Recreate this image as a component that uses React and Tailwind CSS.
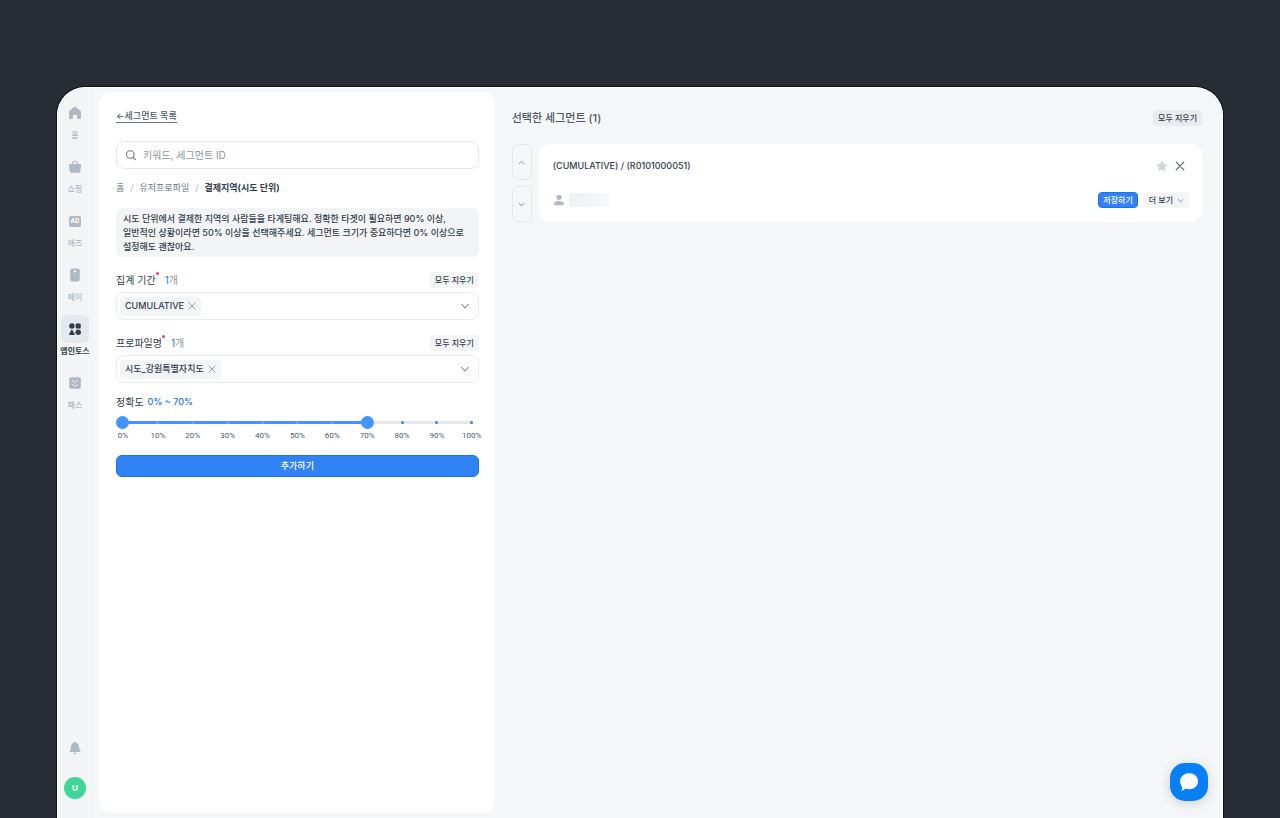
import clsx from "clsx";
import React, { useState } from "react";

const HomeIcon = () => (
  <svg viewBox="0 0 14 14" className="size-[14px]" fill="currentColor" aria-hidden="true">
    <path d="M6.100 1a1.400 1.400 0 0 1 1.800 0l4.500 3.700c.4.300.6.700.6 1.200v5.700c0 .8-.5 1.300-1.300 1.300H9.100V9.800c0-.6-.4-1-1-1H5.900c-.6 0-1 .4-1 1v3.100H2.300c-.8 0-1.300-.5-1.300-1.300V5.900c0-.5.2-.9.6-1.200z" />
  </svg>
);

const ShoppingIcon = () => (
  <svg viewBox="0 0 14 14" className="size-[14px]" aria-hidden="true">
    <path d="M4.300 4.800C4.300 2.300 5.300 1.200 7 1.200s2.700 1.100 2.700 3.600" fill="none" stroke="currentColor" strokeWidth="1.100" />
    <path d="M2 4h10c.7 0 1.200.6 1.100 1.300l-.8 5.600c-.2 1.200-1 1.900-2.200 1.900H3.900c-1.200 0-2-.7-2.200-1.900L.9 5.300C.8 4.600 1.300 4 2 4z" fill="currentColor" />
  </svg>
);

const AdsIcon = () => (
  <span className="flex h-[11px] w-[12px] items-center justify-center rounded-xs bg-current">
    <span className="text-[6px] leading-none font-bold text-white">AD</span>
  </span>
);

const PayIcon = () => (
  <svg viewBox="0 0 14 14" className="size-[14px]" aria-hidden="true">
    <rect x="2.200" y="0.600" width="9.600" height="12.800" rx="1.800" fill="currentColor" />
    <circle cx="7" cy="3.400" r="1.100" fill="white" />
  </svg>
);

const AppsIcon = () => (
  <svg viewBox="0 0 14 14" className="size-[14px]" fill="currentColor" aria-hidden="true">
    <circle cx="3.900" cy="4" r="2.700" />
    <rect x="7.700" y="1.500" width="5" height="5" rx="0.800" />
    <path d="M3.400 8.100c.2-.4.800-.4 1 0l2.300 4c.2.400 0 .9-.5.900H1.600c-.5 0-.7-.5-.5-.9z" />
    <circle cx="10.200" cy="10.300" r="2.700" />
  </svg>
);

const PassIcon = () => (
  <svg viewBox="0 0 14 14" className="size-[14px]" aria-hidden="true">
    <rect x="1.200" y="1.200" width="11.600" height="11.600" rx="1.800" fill="currentColor" />
    <g fill="none" stroke="white" strokeWidth="0.900" strokeLinecap="round">
      <path d="M4.600 4.600v.7M9.400 4.600v.7M7 5.200v1.600M4.300 8.200c.6 1.200 1.500 1.700 2.700 1.700s2.100-.5 2.700-1.700" />
    </g>
  </svg>
);

const SearchIcon = () => (
  <svg viewBox="0 0 12 12" className="size-3 shrink-0 text-[#6b7684]" fill="none" stroke="currentColor" strokeWidth="1.100" strokeLinecap="round" aria-hidden="true">
    <circle cx="5.300" cy="5.500" r="3.800" />
    <path d="M8.200 8.400l2.300 2.300" />
  </svg>
);

const CloseIcon = ({ className }) => (
  <svg viewBox="0 0 10 10" className={className} fill="none" stroke="currentColor" strokeWidth="1.100" strokeLinecap="round" aria-hidden="true">
    <path d="M1.200 1.200l7.600 7.600M8.800 1.200l-7.600 7.600" />
  </svg>
);

const ChevronIcon = ({ up, className }) => (
  <svg viewBox="0 0 10 10" className={className} fill="none" stroke="currentColor" strokeWidth="1.100" strokeLinecap="round" strokeLinejoin="round" aria-hidden="true">
    <path d={up ? "M1.500 6.800L5 3.300l3.500 3.500" : "M1.500 3.300L5 6.800l3.500-3.500"} />
  </svg>
);

const StarIcon = () => (
  <svg viewBox="0 0 12 12" className="size-3" fill="currentColor" stroke="currentColor" strokeWidth="0.800" strokeLinejoin="round" aria-hidden="true">
    <path d="M6 .9l1.600 3.300 3.600.5-2.600 2.500.6 3.600L6 9.100l-3.200 1.700.6-3.600L.8 4.700l3.600-.5z" />
  </svg>
);

const UserIcon = () => (
  <svg viewBox="0 0 12 12" className="size-3 text-[#b0b8c1]" fill="currentColor" aria-hidden="true">
    <circle cx="6" cy="3.300" r="2.600" />
    <path d="M6 6.900c3 0 5 1.300 5 3 0 .9-.6 1.300-1.500 1.300h-7C1.600 11.200 1 10.800 1 9.900c0-1.700 2-3 5-3z" />
  </svg>
);

const BellIcon = () => (
  <svg viewBox="0 0 14 14" className="size-[14px]" fill="currentColor" aria-hidden="true">
    <path d="M7 .8c.6 0 1 .4 1 .9 1.900.4 3.100 2 3.100 4v2.200l1.300 1.800c.4.600.1 1.200-.6 1.200H2.200c-.7 0-1-.6-.6-1.200l1.300-1.800V5.700c0-2 1.200-3.600 3.100-4 0-.5.400-.9 1-.9z" />
    <path d="M5.300 11.800h3.400c-.2.900-.8 1.400-1.700 1.400s-1.500-.5-1.700-1.400z" />
  </svg>
);

const MENU = [
  { label: "홈", icon: <HomeIcon /> },
  { label: "쇼핑", icon: <ShoppingIcon /> },
  { label: "애즈", icon: <AdsIcon /> },
  { label: "페이", icon: <PayIcon /> },
  { label: "앱인토스", icon: <AppsIcon />, active: true },
  { label: "패스", icon: <PassIcon /> },
];

const TICKS = [0, 10, 20, 30, 40, 50, 60, 70, 80, 90, 100];

const Sidebar = () => (
  <aside className="flex w-9 shrink-0 flex-col items-center justify-between bg-[#f2f4f6] pt-[11px] pr-0.5 pb-[19px]">
    <nav className="flex flex-col items-center gap-3">
      {MENU.map((item) => (
        <a
          key={item.label}
          href="#"
          className={clsx(
            "flex flex-col items-center gap-0.5",
            item.active ? "text-[#333d4b]" : "text-[#b0b8c1]"
          )}
        >
          <span
            className={clsx(
              "flex size-7 items-center justify-center rounded-md",
              item.active && "bg-[#e5e8ed]"
            )}
          >
            {item.icon}
          </span>
          <span className={clsx("text-[8px] leading-3 whitespace-nowrap", item.active ? "font-bold" : "font-medium")}>
            {item.label}
          </span>
        </a>
      ))}
    </nav>
    <div className="flex flex-col items-center gap-[22px]">
      <button type="button" aria-label="알림" className="text-[#b0b8c1]">
        <BellIcon />
      </button>
      <button type="button" className="size-[22px] rounded-full bg-[#3fd599] text-[8px] font-bold text-white">
        U
      </button>
    </div>
  </aside>
);

const ClearButton = ({ className, onClick }) => (
  <button
    type="button"
    onClick={onClick}
    className={clsx("h-4 shrink-0 rounded px-[5px] text-[8px] leading-4 font-medium text-[#333d4b]", className)}
  >
    모두 지우기
  </button>
);

const SelectField = ({ id, label, initial }) => {
  const [values, setValues] = useState([initial]);

  return (
    <div className="mt-[15px]">
      <div className="flex items-center justify-between">
        <div className="flex items-center text-[10px] leading-4">
          <label htmlFor={id} className="flex text-[#333d4b]">
            {label}
            <span className="size-[3px] rounded-full bg-[#f04452]" />
          </label>
          <span className="ml-1.5 text-[#8b95a1]">
            <span className="text-[#2272eb]">{values.length}</span>개
          </span>
        </div>
        <ClearButton className="bg-[#f2f4f6]" onClick={() => setValues([])} />
      </div>
      <div className="mt-1 flex h-7 items-center rounded-lg border border-[#e9ecef] pl-[3px]">
        {values.map((value) => (
          <span key={value} className="flex h-[19px] items-center gap-1 rounded bg-[#f2f4f6] px-[5px] text-[9px] font-medium text-[#333d4b]">
            {value}
            <button type="button" aria-label={`${value} 삭제`} onClick={() => setValues([])} className="text-[#8b95a1]">
              <CloseIcon className="size-2" />
            </button>
          </span>
        ))}
        <div className="relative h-full flex-1">
          <select id={id} className="size-full appearance-none bg-transparent outline-none" defaultValue="">
            <option value="" />
            <option value={initial}>{initial}</option>
          </select>
          <ChevronIcon className="pointer-events-none absolute top-2 right-2 size-[10px] text-[#8b95a1]" />
        </div>
      </div>
    </div>
  );
};

const RANGE_INPUT =
  "pointer-events-none absolute inset-0 size-full appearance-none bg-transparent outline-none [&::-webkit-slider-thumb]:pointer-events-auto [&::-webkit-slider-thumb]:size-[13px] [&::-webkit-slider-thumb]:appearance-none [&::-webkit-slider-thumb]:rounded-full [&::-webkit-slider-thumb]:bg-[#4593fc]";

const AccuracySlider = () => {
  const [from, setFrom] = useState(0);
  const [to, setTo] = useState(70);

  return (
    <div role="group" aria-labelledby="accuracy" className="mt-[11px]">
      <div className="flex gap-1 leading-4">
        <span id="accuracy" className="text-[10px] text-[#333d4b]">정확도</span>
        <span className="text-[9px] font-medium text-[#2272eb]">{`${from}% ~ ${to}%`}</span>
      </div>
      <div className="relative mt-1.5 flex h-[13px] items-center px-[7px]">
        <div className="relative h-[3px] w-full rounded-full bg-[#e5e8eb]">
          <div
            className="absolute inset-y-0 bg-[#4593fc]"
            style={{ left: `${from}%`, width: `${to - from}%` }}
          />
          <div className="absolute inset-0 flex items-center justify-between">
            {TICKS.map((tick) => (
              <span key={tick} className="flex w-0 justify-center">
                <span
                  className={clsx(
                    "size-[3px] shrink-0 rounded-full",
                    tick > to ? "bg-[#3182f6]" : "bg-[#64a8ff]"
                  )}
                />
              </span>
            ))}
          </div>
        </div>
        <input
          type="range"
          aria-label="최소 정확도"
          min="0"
          max="100"
          step="10"
          value={from}
          onChange={(e) => setFrom(Math.min(Number(e.target.value), to))}
          className={RANGE_INPUT}
        />
        <input
          type="range"
          aria-label="최대 정확도"
          min="0"
          max="100"
          step="10"
          value={to}
          onChange={(e) => setTo(Math.max(Number(e.target.value), from))}
          className={RANGE_INPUT}
        />
      </div>
      <div className="mt-px flex justify-between px-[7px] font-['Roboto',sans-serif] text-[8px] leading-3 text-[#4e5968]">
        {TICKS.map((tick) => (
          <span key={tick} className="flex w-0 justify-center">
            {`${tick}%`}
          </span>
        ))}
      </div>
    </div>
  );
};

const FilterPanel = () => (
  <section className="mt-1 mb-[5px] ml-[5px] w-[34%] shrink-0 rounded-xl bg-white pt-[17px] pr-4 pl-[17px]">
    <a href="#" className="block w-fit border-b border-[#6b7684] text-[9px] leading-[13px] font-medium text-[#4e5968]">
      ←세그먼트 목록
    </a>
    <label className="mt-[18px] flex h-7 items-center gap-1.5 rounded-lg border border-[#e5e8eb] px-2">
      <SearchIcon />
      <input
        type="search"
        aria-label="세그먼트 검색"
        placeholder="키워드, 세그먼트 ID"
        className="min-w-0 flex-1 bg-transparent text-[10px] leading-4 outline-none placeholder:text-[#8b95a1]"
      />
    </label>
    <nav className="mt-[11px] flex gap-1.5 text-[9px] leading-4 text-[#6b7684]">
      <a href="#">홈</a>
      <span className="text-[#b0b8c1]">/</span>
      <a href="#">유저프로파일</a>
      <span className="text-[#b0b8c1]">/</span>
      <span className="font-bold text-[#333d4b]">결제지역(시도 단위)</span>
    </nav>
    <p className="mt-3 rounded-md bg-[#f2f4f6] px-[7px] pt-1 pb-[3px] text-[9px] leading-[14px] font-medium text-[#333d4b]">
      시도 단위에서 결제한 지역의 사람들을 타게팅해요. 정확한 타겟이 필요하면 90% 이상,
      <br />
      일반적인 상황이라면 50% 이상을 선택해주세요. 세그먼트 크기가 중요하다면 0% 이상으로
      <br />
      설정해도 괜찮아요.
    </p>
    <SelectField id="period" label="집계 기간" initial="CUMULATIVE" />
    <SelectField id="profile" label="프로파일명" initial="시도_강원특별자치도" />
    <AccuracySlider />
    <button
      type="button"
      className="mt-[13px] h-[22px] w-full rounded-md border border-[#1b72f0] bg-[#3182f6] text-[9px] font-medium text-white"
    >
      추가하기
    </button>
  </section>
);

const MoveButton = ({ up }) => (
  <button
    type="button"
    aria-label={up ? "위로 이동" : "아래로 이동"}
    className="flex w-5 flex-1 items-center justify-center rounded-md border border-[#e5e8eb] text-[#6b7684]"
  >
    <ChevronIcon up={up} className="size-[7px]" />
  </button>
);

const SegmentCard = () => (
  <article className="flex h-[78px] flex-1 flex-col justify-between rounded-xl bg-white pt-[13px] pr-[13px] pb-[14px] pl-[14px]">
    <div className="flex items-center justify-between">
      <h2 className="text-[9px] leading-[18px] font-medium text-[#333d4b]">(CUMULATIVE) / (R0101000051)</h2>
      <div className="flex items-center gap-[7px] pr-1">
        <button type="button" aria-label="즐겨찾기" className="text-[#d1d6db]">
          <StarIcon />
        </button>
        <button type="button" aria-label="삭제" className="text-[#4e5968]">
          <CloseIcon className="size-[10px]" />
        </button>
      </div>
    </div>
    <div className="flex items-center justify-between">
      <div className="flex items-center gap-1">
        <UserIcon />
        <span className="h-[14px] w-10 rounded bg-linear-to-r from-[#f0f1f3] to-[#f6f7f8]" />
      </div>
      <div className="flex items-center gap-1.5">
        <button type="button" className="h-4 rounded border border-[#1b72f0] bg-[#3182f6] px-1 text-[8px] leading-[14px] font-medium text-white">
          저장하기
        </button>
        <button type="button" className="flex h-4 items-center gap-1 rounded bg-[#f2f4f6] px-[5px] text-[8px] font-medium text-[#333d4b]">
          더 보기
          <ChevronIcon className="size-[7px] text-[#6b7684]" />
        </button>
      </div>
    </div>
  </article>
);

const App = () => (
  <div className="flex min-h-screen flex-col bg-[#282c35] px-[57px] pt-[87px] font-['Inter','Noto_Sans_CJK_KR',sans-serif]">
    <div className="flex flex-1 overflow-hidden rounded-t-[28px] border border-b-0 border-white bg-[#f5f6f8] ring-1 ring-[#0d1015]">
      <Sidebar />
      <FilterPanel />
      <main className="min-w-0 flex-1 pt-[22px] pr-5 pl-[17px]">
        <header className="flex items-center justify-between">
          <h1 className="text-[11px] leading-4 font-medium text-[#4e5968]">선택한 세그먼트 (1)</h1>
          <ClearButton className="bg-[#e8ebef]" />
        </header>
        <div className="mt-[18px] flex gap-[7px]">
          <div className="flex flex-col gap-1.5">
            <MoveButton up />
            <MoveButton />
          </div>
          <SegmentCard />
        </div>
      </main>
    </div>
    <button
      type="button"
      aria-label="채팅 문의"
      className="fixed right-[72px] bottom-[17px] flex size-[38px] items-center justify-center rounded-[15px] bg-[#0880f5] text-white shadow-[0_2px_12px_rgba(0,0,0,0.16)]"
    >
      <svg viewBox="0 0 20 20" className="size-5" fill="currentColor" aria-hidden="true">
        <path d="M10.200 1.200c5 0 8.800 3.500 8.800 8s-3.800 8-8.800 8c-1.300 0-2.500-.2-3.600-.7-.9 1-2.100 1.800-3.700 2.300-.4.100-.6-.3-.4-.6.5-.8.800-1.900.7-3.200C2 13.600 1.100 11.600 1.100 9.200c0-4.500 4-8 9.100-8z" />
      </svg>
    </button>
  </div>
);

export default App;
